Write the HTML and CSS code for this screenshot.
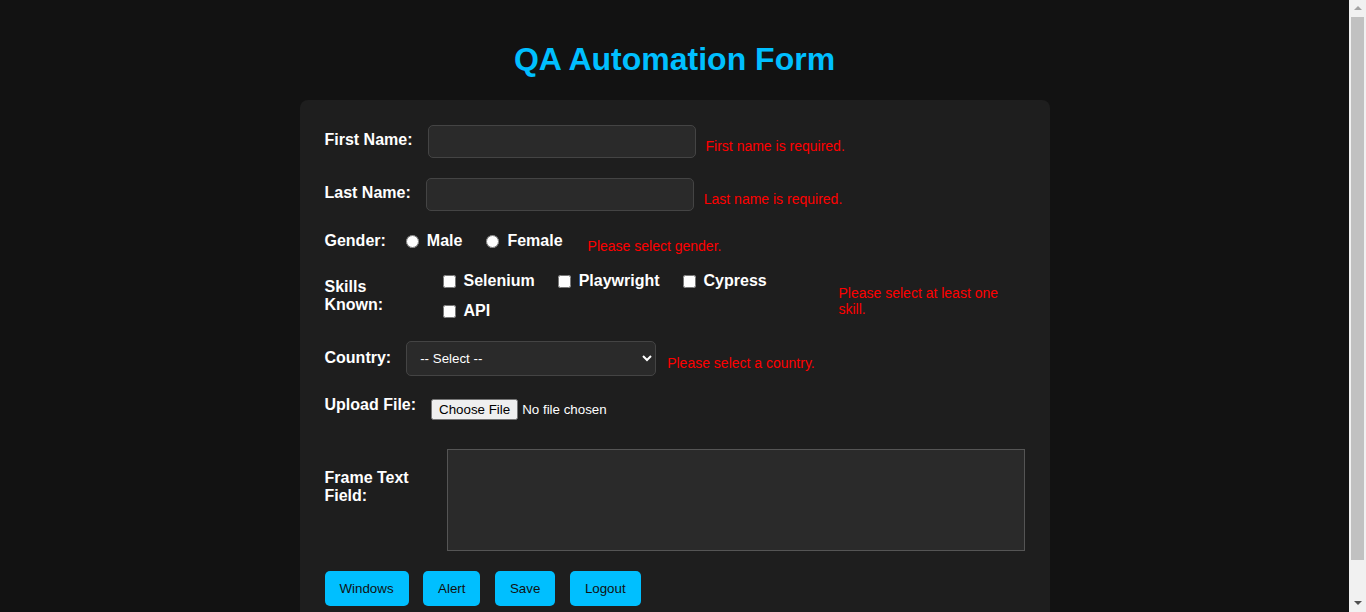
FILE: index.html
```
<!DOCTYPE html>
<html lang="en">
<head>
<meta charset="utf-8">
<title>QA Automation Form</title>
<link rel="stylesheet" href="styles.css">
</head>
<body>
<h1 class="title">QA Automation Form</h1>
<form class="card">
  <div class="row row-first">
    <label class="lbl lbl-input" for="fn">First Name:</label>
    <input class="text-input" id="fn" type="text">
    <span class="error err-input">First name is required.</span>
  </div>
  <div class="row row-last">
    <label class="lbl lbl-input" for="ln">Last Name:</label>
    <input class="text-input" id="ln" type="text">
    <span class="error err-input">Last name is required.</span>
  </div>
  <div class="row row-gender">
    <span class="lbl lbl-gender">Gender:</span>
    <label class="opt opt-radio"><input type="radio" name="g" class="radio">Male</label>
    <label class="opt opt-radio"><input type="radio" name="g" class="radio">Female</label>
    <span class="error err-gender">Please select gender.</span>
  </div>
  <div class="row row-skills">
    <span class="lbl lbl-skills">Skills Known:</span>
    <div class="skills">
      <label class="opt opt-check"><input type="checkbox" class="check">Selenium</label>
      <label class="opt opt-check"><input type="checkbox" class="check">Playwright</label>
      <label class="opt opt-check"><input type="checkbox" class="check">Cypress</label>
      <label class="opt opt-check"><input type="checkbox" class="check">API</label>
    </div>
    <span class="error err-skills">Please select at least one skill.</span>
  </div>
  <div class="row row-country">
    <label class="lbl lbl-country" for="country">Country:</label>
    <select class="select" id="country">
      <option>-- Select --</option>
    </select>
    <span class="error err-country">Please select a country.</span>
  </div>
  <div class="row row-upload">
    <label class="lbl lbl-upload" for="file">Upload File:</label>
    <input class="file" id="file" type="file">
  </div>
  <div class="row row-frame">
    <label class="lbl lbl-frame" for="ta">Frame Text Field:</label>
    <textarea class="area" id="ta"></textarea>
  </div>
  <div class="buttons">
    <button type="button" class="btn">Windows</button>
    <button type="button" class="btn">Alert</button>
    <button type="button" class="btn">Save</button>
    <button type="button" class="btn">Logout</button>
  </div>
</form>
<div class="scrollbar" aria-hidden="true">
  <div class="sb-arrow sb-up"></div>
  <div class="sb-thumb"></div>
  <div class="sb-arrow sb-down"></div>
</div>
</body>
</html>
```
FILE: styles.css
```
html, body {
  background: #121212;
}
body {
  margin: 0;
  padding: 20px 37px 20px 20px;
  font-family: "Liberation Sans", Arial, sans-serif;
  color: #ffffff;
}
.title {
  text-align: center;
  color: #00bfff;
  font-size: 32px;
  font-weight: bold;
  margin: 21px 0 22px;
}
.card {
  box-sizing: border-box;
  width: 750px;
  margin: 0 auto;
  background: #1e1e1e;
  border-radius: 8px;
  padding: 25px 25px 25px;
}
.row {
  display: flex;
  align-items: flex-start;
  margin-bottom: 20px;
}
.lbl {
  font-weight: bold;
  font-size: 16px;
  margin-right: 15px;
  flex-shrink: 0;
}
.lbl-input { margin-top: 6px; }
.text-input {
  box-sizing: border-box;
  width: 268px;
  height: 33px;
  background: #2a2a2a;
  border: 1px solid #444444;
  border-radius: 5px;
  color: #fff;
  font-size: 14px;
  padding: 8px;
  margin: 0;
}
.error {
  color: #ff0000;
  font-size: 14px;
  line-height: 16px;
}
.err-input { margin: 13px 0 0 10px; }

.row-gender { margin-bottom: 18px; }
.lbl-gender { margin-top: 1px; }
.opt {
  display: inline-flex;
  align-items: center;
  font-weight: bold;
  font-size: 16px;
  height: 18px;
}
.opt-radio { margin-top: 1px; margin-right: 19px; }
.radio {
  width: 13px;
  height: 13px;
  margin: 0 8px 0 5px;
}
.err-gender { margin: 7px 0 0 6px; }

.row-skills { margin-bottom: 21px; }
.lbl-skills { width: 99px; margin-top: 6px; }
.skills {
  width: 360px;
  display: flex;
  flex-wrap: wrap;
  row-gap: 12px;
  flex-shrink: 0;
}
.opt-check { margin-right: 19px; }
.check {
  width: 13px;
  height: 13px;
  margin: 0 8px 0 4px;
}
.err-skills { flex: 1; margin: 13px 0 0 40px; }

.lbl-country { margin-top: 8px; margin-right: 15px; }
.select {
  box-sizing: border-box;
  width: 250px;
  height: 35px;
  background: #2a2a2a;
  color: #ffffff;
  border: 1px solid #444444;
  border-radius: 5px;
  padding: 0 9px;
  font-family: "Liberation Sans", Arial, sans-serif;
  font-size: 13.33px;
  margin: 0;
}
.err-country { margin: 14px 0 0 11px; }

.row-upload { margin-bottom: 29px; }
.lbl-upload { margin-top: 0; margin-right: 15px; }
.file {
  margin-top: 3px;
  color: #ffffff;
  font-family: "Liberation Sans", Arial, sans-serif;
  font-size: 13.33px;
}

.lbl-frame { width: 106px; margin-top: 20px; margin-right: 16px; }
.area {
  flex: 1;
  box-sizing: border-box;
  height: 102px;
  background: #2a2a2a;
  border: 1px solid #555555;
  color: #fff;
  margin: 0;
  resize: none;
}

.buttons {
  display: flex;
  gap: 14.5px;
}
.btn {
  height: 35px;
  padding: 0 15px;
  background: #00bfff;
  color: #111111;
  border: none;
  border-radius: 5px;
  font-family: "Liberation Sans", Arial, sans-serif;
  font-size: 13.33px;
}

/* decorative classic scrollbar, drawn over the right edge as in the screenshot */
.scrollbar {
  position: fixed;
  top: 0;
  right: 0;
  width: 17px;
  height: 100vh;
  background: #f1f1f1;
  display: flex;
  flex-direction: column;
  align-items: center;
}
.sb-arrow {
  width: 0;
  height: 0;
  border-left: 4px solid transparent;
  border-right: 4px solid transparent;
}
.sb-up {
  margin-top: 6px;
  border-bottom: 4px solid #a3a3a3;
}
.sb-thumb {
  width: 13px;
  margin-top: 7px;
  flex: 1;
  background: #c1c1c1;
}
.sb-down {
  margin: 41px 0 7px;
  border-top: 4px solid #505050;
}
```
